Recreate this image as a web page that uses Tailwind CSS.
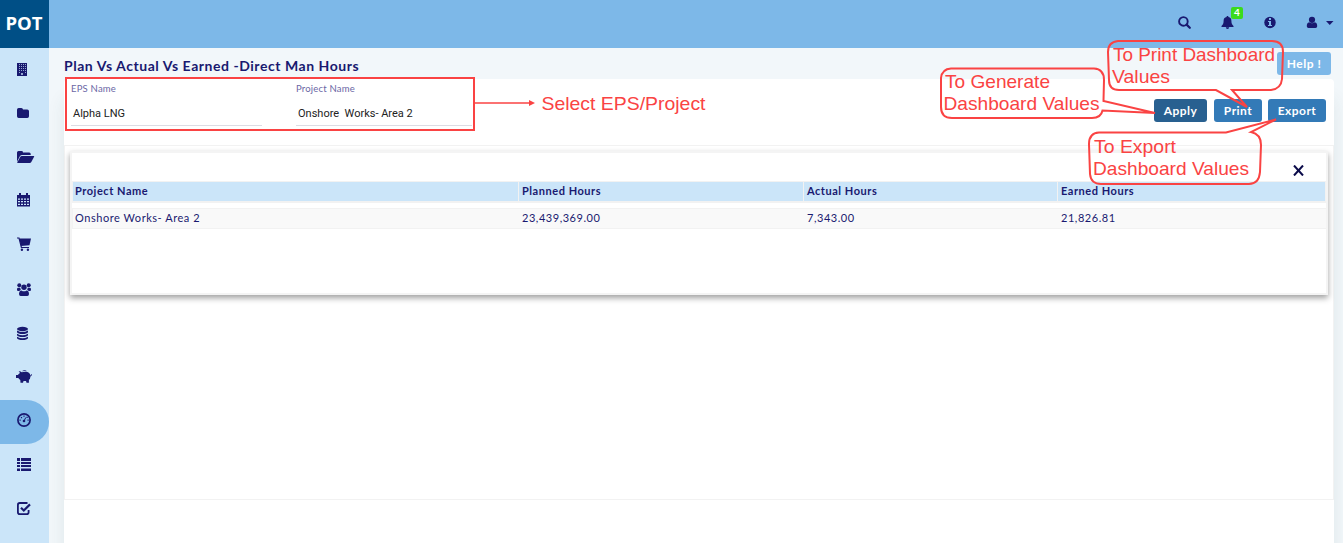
<!DOCTYPE html>
<html lang="en">
<head>
<meta charset="utf-8">
<title>Plan Vs Actual Vs Earned</title>
<script src="https://cdn.jsdelivr.net/npm/@tailwindcss/browser@4"></script>
</head>
<body class="relative flex h-[543px] w-[1343px] flex-col overflow-hidden bg-[#f2f7fa] font-['Lato',sans-serif] text-[#191970]">
<header class="relative z-10 flex h-12 shrink-0 bg-[#7db8e8]">
  <div class="flex w-[49px] items-center justify-center bg-[#004f86] pr-px pb-0.5 font-['Open_Sans',sans-serif] text-[18.5px] font-bold text-white">POT</div>
  <div class="ml-auto flex items-start pt-4 pr-[9px]">
    <svg class="h-[13px] w-[13px]" viewBox="0 0 13 13" fill="none" stroke="currentColor"><circle cx="5.4" cy="5.4" r="4.3" stroke-width="1.9"/><path d="M8.600 8.600l3.200 3.200" stroke-width="2.200" stroke-linecap="round"/></svg>
    <div class="relative ml-[30px]">
      <svg class="h-[13px] w-[13px]" viewBox="0 0 13 13" fill="currentColor"><path d="M5.8 0h1.4l.2 1.1C9.600 1.500 10.400 3 10.400 5c0 2.500.8 3.900 2.100 5v.9H.5V10C1.800 8.900 2.600 7.500 2.600 5c0-2 .8-3.500 3-3.900z"/><path d="M4.800 11.300h3.400a1.700 1.700 0 0 1-3.400 0z"/></svg>
      <span class="absolute -top-[9px] left-[10px] flex h-3 w-3 items-center justify-center rounded-[2px] bg-[#3bdb1c] pb-px text-[10px] font-bold text-white">4</span>
    </div>
    <svg class="ml-[30px] h-[13px] w-[13px]" viewBox="0 0 13 13"><circle cx="6" cy="6.500" r="5.700" fill="currentColor"/><path d="M4 5h3v4h1v1H4V9h1V6H4zM5 2h2v2H5z" fill="#7db8e8"/></svg>
    <svg class="ml-[29px] h-[13px] w-[12px]" viewBox="0 0 12 13" fill="currentColor"><circle cx="6" cy="3.800" r="3.100"/><path d="M3.200 6.200c1.700 1.500 3.900 1.500 5.600 0C10.600 6.500 11.200 8 11.200 10c0 1.200-.7 1.900-1.700 1.900h-7C1.500 11.900.8 11.200.8 10c0-2 .6-3.500 2.400-3.800z"/></svg>
    <svg class="mt-[5px] ml-[8px] h-[4px] w-[8px]" viewBox="0 0 8 4" fill="currentColor"><path d="M0 0h7.500L3.750 4z"/></svg>
  </div>
</header>

<div class="flex min-h-0 flex-1">
  <nav class="flex w-[49px] shrink-0 flex-col bg-[#cbe5f9] *:flex *:h-11 *:shrink-0 *:items-center *:pl-4 [&_svg]:h-4 [&_svg]:w-4">
    <a><svg viewBox="0 0 16 16"><path d="M1 1h10v13H1z" fill="currentColor"/><g fill="#cbe5f9" fill-opacity=".7"><path d="M3 2h1v1H3zM5 2h1v1H5zM7 2h1v1H7zM9 2h1v1H9zM3 4h1v1H3zM5 4h1v1H5zM7 4h1v1H7zM9 4h1v1H9zM3 6h1v1H3zM5 6h1v1H5zM7 6h1v1H7zM9 6h1v1H9zM3 8h1v1H3zM5 8h1v1H5zM7 8h1v1H7zM9 8h1v1H9zM3 10h1v1H3zM9 10h1v1H9zM5 11h2v2H5z"/></g></svg></a>
    <a><svg viewBox="0 0 16 16" fill="currentColor"><path d="M1 3.800Q1 2 2.700 2h2.600Q7 2 7 3.600h4.300Q13 3.600 13 5.300v5Q13 12 11.300 12H2.700Q1 12 1 10.300z"/></svg></a>
    <a><svg class="!w-[20px] -translate-y-px" viewBox="0 0 20 16" fill="currentColor"><path d="M1 12.700V3.500Q1 2 2.500 2h3Q7 2 7 3.400h6.200Q14.700 3.400 14.700 5v1H6Q4.800 6 4 7z"/><path d="M5.700 7h12q.8 0 .4.800L15.300 13q-.6 1-1.600 1H1.700q-.8 0-.4-.8L4.200 7.900Q4.700 7 5.700 7z"/></svg></a>
    <a><svg class="-translate-y-[2px]" viewBox="0 0 16 16"><path d="M1 3h2V1h2v2h5V1h2v2h2v11.500H1z" fill="currentColor"/><path d="M2 6.600h2v1.200H2zM5 6.600h2v1.200H5zM8 6.600h2v1.200H8zM11 6.600h2v1.200h-2zM2 9.100h2v1.200H2zM5 9.100h2v1.200H5zM8 9.100h2v1.200H8zM11 9.100h2v1.200h-2zM2 11.700h2v1.200H2zM5 11.700h2v1.200H5zM8 11.700h2v1.200H8zM11 11.700h2v1.200h-2z" fill="#cbe5f9"/></svg></a>
    <a><svg class="-translate-y-[2px]" viewBox="0 0 16 16" fill="currentColor"><path d="M3.300 2.500H15l-1.500 6.800L5 10z"/><path d="M1 2h2L5.400 11.500H13" fill="none" stroke="currentColor" stroke-width="1.200"/><circle cx="5.900" cy="13.700" r="1.200"/><circle cx="11.900" cy="13.700" r="1.200"/></svg></a>
    <a><svg viewBox="0 0 16 16" fill="currentColor"><circle cx="3.300" cy="3.300" r="2"/><circle cx="12.700" cy="3.300" r="2"/><circle cx="8" cy="5.200" r="2.700"/><path d="M1 8C1 6.300 1.400 5.600 2.300 5.800h2q.1 1.300.6 2Q4 8 3.400 9h-1.200Q1 9 1 8zM15 8c0-1.700-.4-2.400-1.300-2.200h-2q-.1 1.300-.6 2 .900.200 1.500 1.200h1.200Q15 9 15 8zM5.400 8.400q2.600 1.700 5.200 0Q13 8.800 13 12q0 2-1.700 2H4.700Q3 14 3 12q0-3.200 2.400-3.600z"/></svg></a>
    <a><svg viewBox="0 0 16 16" fill="currentColor"><ellipse cx="6.500" cy="3" rx="5.500" ry="2.200"/><path d="M1 4.600q5.500 3 11 0v1.600Q11 8 6.500 8T1 6.200zM1 7.700q5.500 3 11 0v1.500Q11 11 6.500 11T1 9.200zM1 10.700q5.500 3 11 0v1.500Q11 14 6.500 14T1 12.200z"/></svg></a>
    <a><svg class="!w-[18px] -translate-y-px" viewBox="0 0 18 16" fill="currentColor"><path d="M4 4Q3.400 2.700 2.600 2.200 4.600 2 5.700 3.200 7 2.700 9.500 2.700q4.300.3 5 3.800.9 0 .5-1.500l.8.200q.2 1.900-1.400 2.200Q14.400 9.700 12.900 10.800v3h-2.400L10 12H7.500L7 13.800H4.500L4.300 11Q2.900 10.200 2.300 9H0V6h1.900Q2.500 4.800 4 4z"/><path d="M6 2.300a3 2.200 0 0 1 5 0q-2.500-.8-5 0z"/></svg></a>
    <a class="rounded-r-[22px] bg-[#7db8e8]"><svg class="-translate-y-[2px]" viewBox="0 0 16 16" fill="currentColor"><circle cx="8" cy="8" r="6.100" fill="none" stroke="currentColor" stroke-width="1.700"/><circle cx="8" cy="9" r="1.300"/><path d="M8 9l1.800-3.500" stroke="currentColor"/><path d="M3.500 7.500h1.200v1.200H3.500zM4.900 5h1.200v1.200H4.900zM7.400 3.600h1.200v1.200H7.400zM10.500 4.800h1.200V6h-1.200zM11.500 7.500h1.200v1.200h-1.200z"/></svg></a>
    <a><svg class="-translate-y-px" viewBox="0 0 16 16" fill="currentColor"><path d="M1 1h3v3H1zM5 1h10v3H5zM1 5h3v2H1zM5 5h10v2H5zM1 8h3v2H1zM5 8h10v2H5zM1 11.500h3v2.500H1zM5 11.500h10v2.500H5z"/></svg></a>
    <a><svg class="-translate-y-px" viewBox="0 0 16 16" fill="none" stroke="currentColor"><path d="M11.500 2H3.800Q1.900 2 1.900 3.900v7.400q0 1.900 1.900 1.900h6.900q1.900 0 1.900-1.900V9" stroke-width="1.800"/><path d="M5 6.800l2.800 2.700L14 3.400" stroke-width="2.200"/></svg></a>
  </nav>

  <main class="relative flex min-w-0 flex-1 flex-col overflow-hidden pr-[9px] pl-[15px]">
    <div class="flex h-[31px] shrink-0 items-start justify-between">
      <h1 class="pt-[9px] text-[14px] leading-[18px] font-bold tracking-[0.54px] whitespace-nowrap">Plan Vs Actual Vs Earned -Direct Man Hours</h1>
      <button class="mt-1 mr-[3px] h-[23px] w-[54px] rounded-[3px] bg-[#7db8e8] text-[12px] font-bold tracking-[0.5px] text-white">Help !</button>
    </div>
    <section class="flex min-h-0 flex-1 flex-col rounded-t bg-white shadow-[0_20px_18px_rgba(40,80,80,0.09)]">
      <div class="flex h-[66px] shrink-0 justify-between pl-[7px]">
        <div class="flex gap-[34px]">
          <label class="flex h-[47px] w-[191px] flex-col border-b border-[#dcdce4]"><span class="pt-[3px] text-[9.5px] leading-[14px] tracking-[0.2px] text-[#6b67a5]">EPS Name</span><span class="pt-[9px] pl-[2px] font-['Roboto',sans-serif] text-[11px] leading-[18px] text-[#222]">Alpha LNG</span></label>
          <label class="flex h-[47px] w-[176px] flex-col border-b border-[#dcdce4]"><span class="pt-[3px] text-[9.5px] leading-[14px] tracking-[0.2px] text-[#6b67a5]">Project Name</span><span class="pt-[9px] pl-[2px] font-['Roboto',sans-serif] text-[11px] leading-[18px] whitespace-pre text-[#222]">Onshore  Works- Area 2</span></label>
        </div>
        <div class="flex gap-[7px] pt-5 pr-2 text-[12px] font-bold tracking-[0.45px] text-white *:h-[23px] *:rounded-[3px]">
          <button class="w-[53px] bg-[#286090]">Apply</button>
          <button class="w-[48px] bg-[#337ab7]">Print</button>
          <button class="-ml-px w-[58px] bg-[#337ab7]">Export</button>
        </div>
      </div>
      <div class="h-[355px] shrink-0 border border-[#f2f2f2] px-[5px] pt-[5px]">
        <div class="flex h-[144px] flex-col border-2 border-[#f4f4f4] bg-white shadow-[0_3px_6px_rgba(0,0,0,0.38)]">
          <div class="flex h-[28px] shrink-0 items-start justify-end pt-[12px] pr-[22px]"><svg class="h-[11px] w-[11px]" viewBox="0 0 11 11" fill="none" stroke="#0b0b4a" stroke-width="2"><path d="M1 .500l9 10M10 .500l-9 10"/></svg></div>
          <table class="w-full table-fixed border-separate border-spacing-0 text-left text-[11px] tracking-[0.54px]">
            <colgroup><col class="w-[446px]"><col class="w-[285px]"><col class="w-[254px]"><col></colgroup>
            <thead><tr class="h-[22px] *:border-2 *:border-t-1 *:border-r-0 *:border-l-1 *:border-[#f2f2f2] *:bg-[#cbe5f9] *:bg-clip-padding *:p-0 *:pb-[2px] *:pl-[3px] *:leading-[16px] *:font-bold *:first:pl-[2px] *:last:border-r-1"><th>Project Name</th><th>Planned Hours</th><th>Actual Hours</th><th>Earned Hours</th></tr></thead>
            <tbody>
              <tr class="h-[5px]"><td colspan="4" class="p-0"></td></tr>
              <tr class="h-[21px] *:border-y *:border-[#f2f2f2] *:bg-[#f9f9f9] *:p-0 *:pb-px *:pl-[4px] *:leading-[16px] *:first:border-l *:first:pl-[2px]"><td>Onshore Works- Area 2</td><td>23,439,369.00</td><td>7,343.00</td><td>21,826.81</td></tr>
            </tbody>
          </table>
        </div>
      </div>
    </section>
  </main>
</div>

<!-- Callout annotations floating above the dashboard -->
<svg class="pointer-events-none absolute inset-0 z-20 h-[543px] w-[1343px] font-['Liberation_Sans',sans-serif] text-[19px]" viewBox="0 0 1343 543" fill="none" stroke="#fa4343" stroke-width="2">
  <path d="M66 78h408v52H66z"/><path d="M475 103h55" stroke-width="1.700"/>
  <path d="M529 100l6 3-6 3z" fill="#fa4343" stroke="none"/>
  <path d="M951 68.500H1094Q1104 69 1104 80L1103.500 101 1155 113 1102.500 110.500Q1101 118 1092 118H952Q941 118 941 107V78Q942 69 951 68.500z"/>
  <path d="M1118 41H1272Q1283 41 1283 52L1282 79Q1281 89 1271 90H1232L1247 107 1216 90H1119Q1109 90 1109 80L1108 52Q1108 42 1118 41z"/>
  <path d="M1099 132.500H1226L1276 119.500 1251 132Q1261 134 1261 145L1260 172Q1259 184 1249 184H1101Q1091 184 1090 174L1089 144Q1089 133 1099 132.500z"/>
  <g fill="#fa4343" stroke="none">
    <text x="541.500" y="110" textLength="164" lengthAdjust="spacingAndGlyphs">Select EPS/Project</text>
    <text x="945" y="88" textLength="105" lengthAdjust="spacingAndGlyphs">To Generate</text>
    <text x="943.500" y="110" textLength="156" lengthAdjust="spacingAndGlyphs">Dashboard Values</text>
    <text x="1113" y="61" textLength="162" lengthAdjust="spacingAndGlyphs">To Print Dashboard</text>
    <text x="1112" y="83" textLength="58" lengthAdjust="spacingAndGlyphs">Values</text>
    <text x="1094" y="153" textLength="82" lengthAdjust="spacingAndGlyphs">To Export</text>
    <text x="1093" y="175" textLength="156" lengthAdjust="spacingAndGlyphs">Dashboard Values</text>
  </g>
</svg>
</body>
</html>
